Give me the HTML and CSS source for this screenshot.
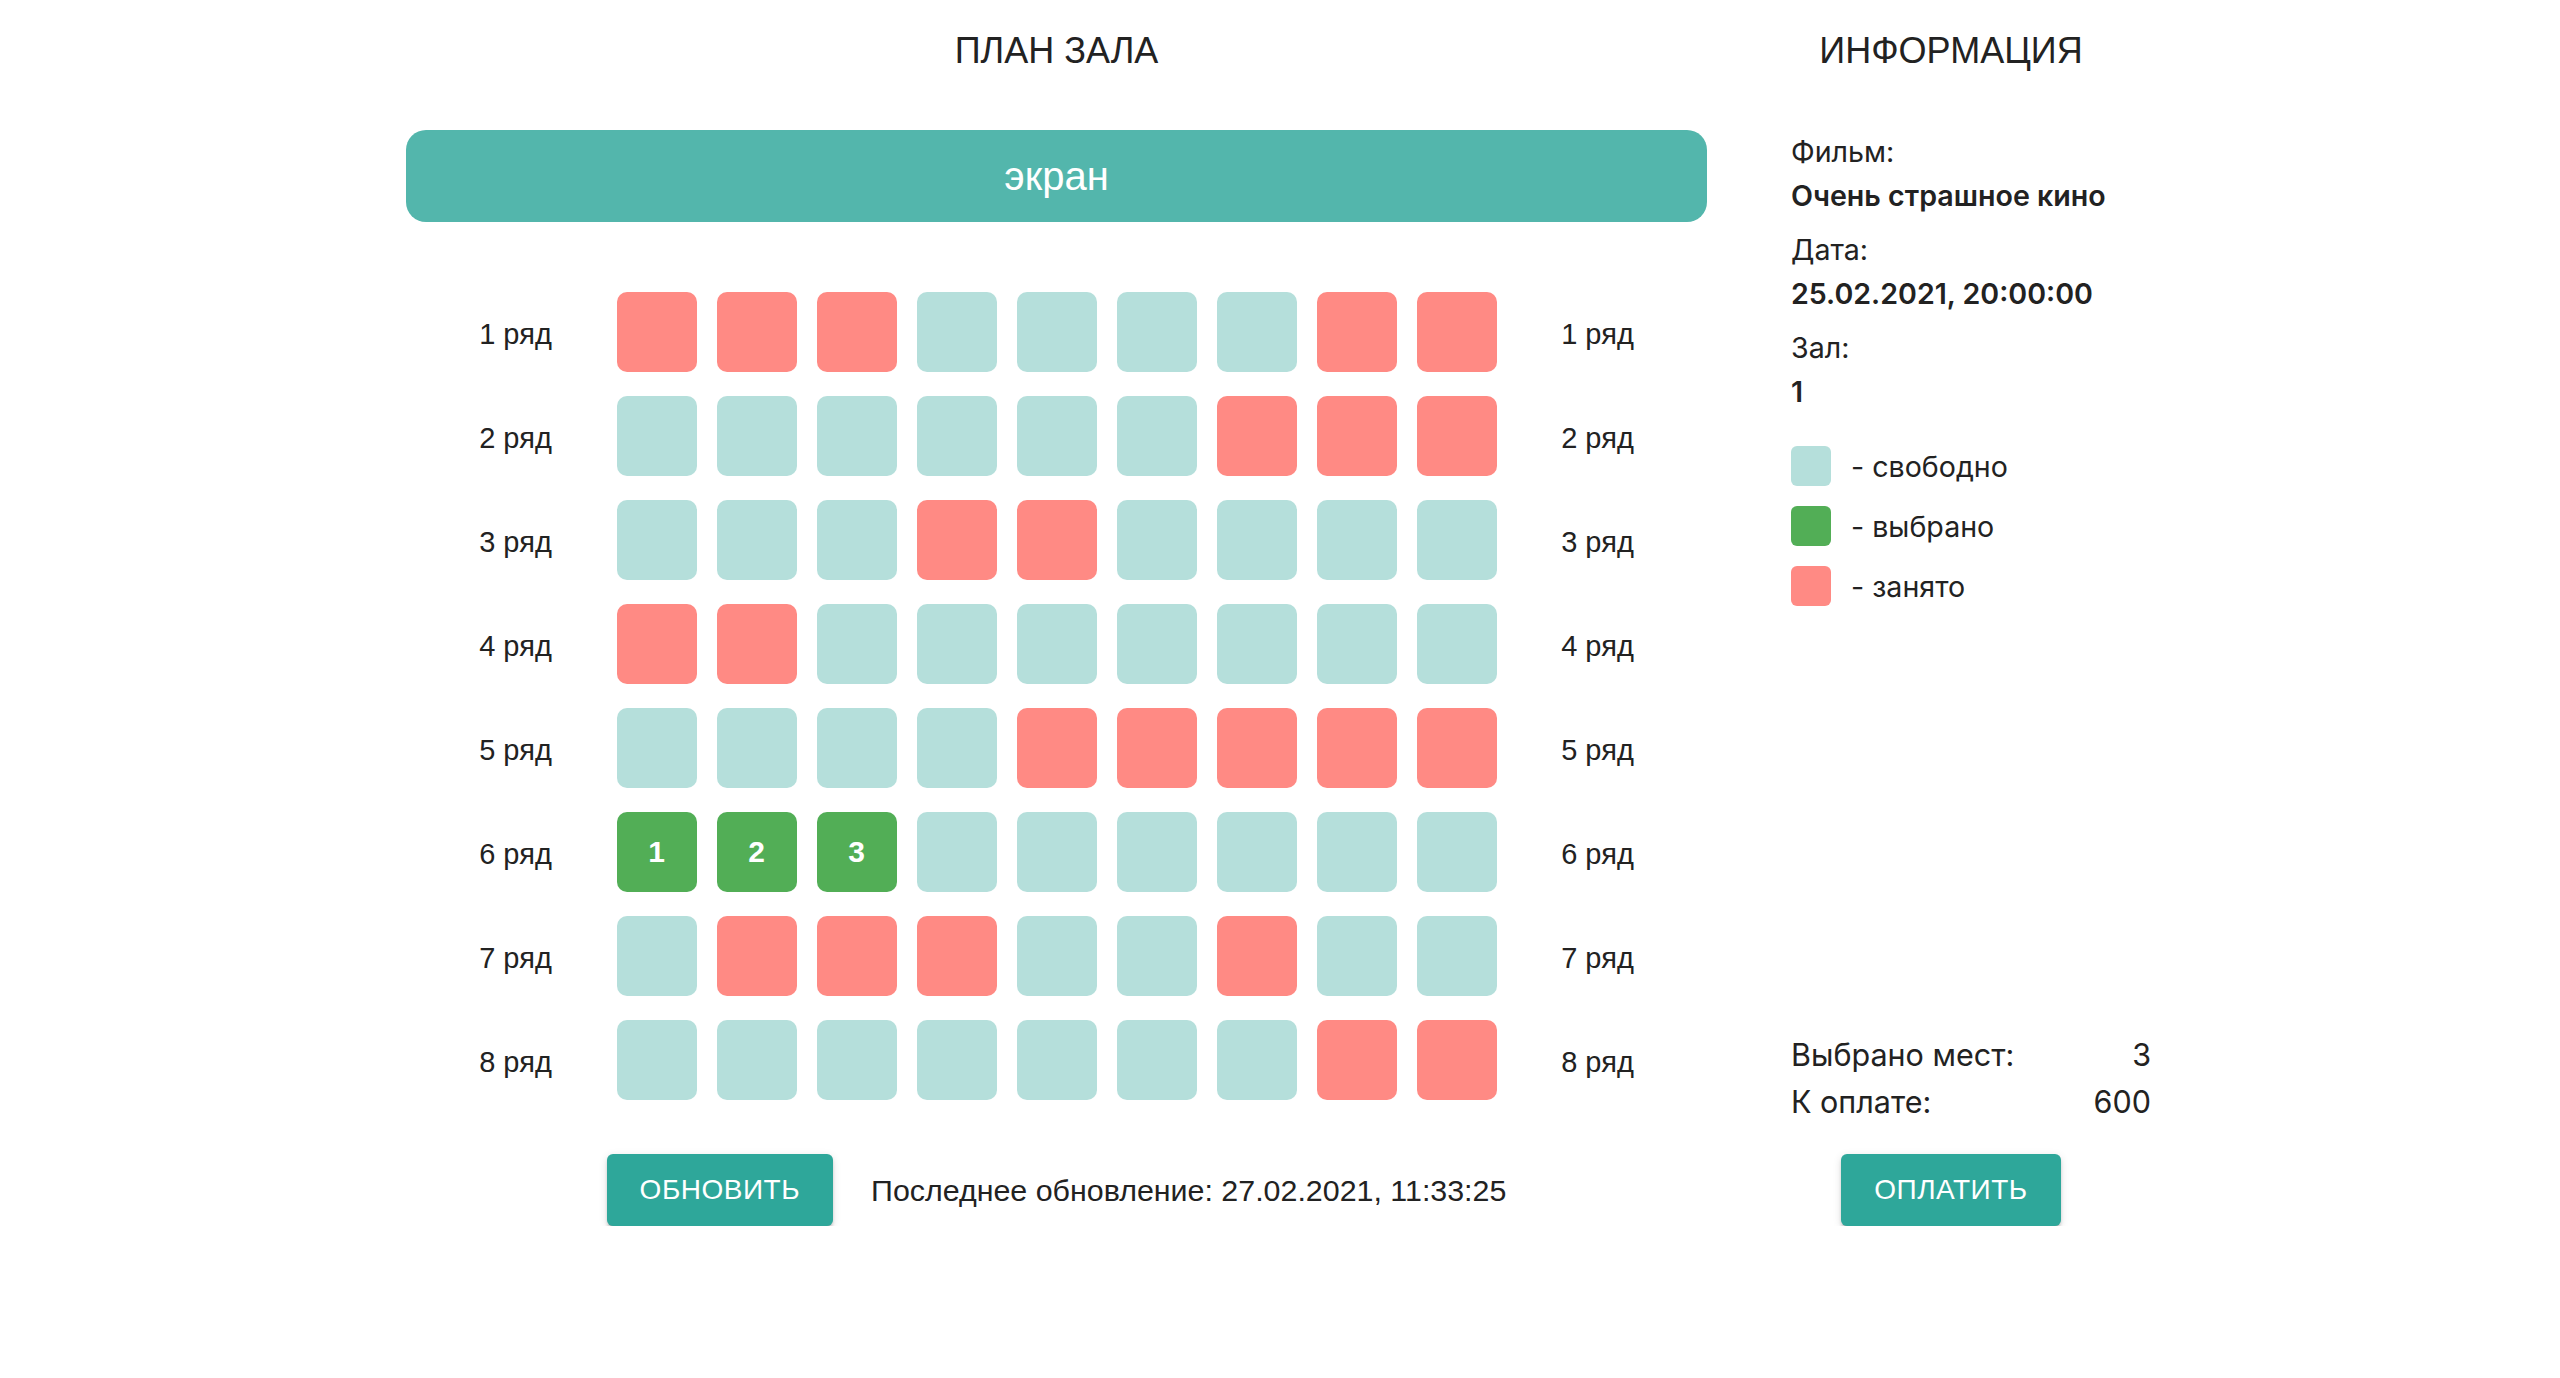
FILE: index.html
```html
<!DOCTYPE html>
<html lang="ru">
<head>
    <meta charset="UTF-8">
    <meta name="viewport" content="width=device-width, initial-scale=1.0">
    <title>План зала</title>
    <link rel="stylesheet" href="styles.css">
</head>
<body>
    <div class="page">
        <section class="hall">
            <h2 class="title">ПЛАН ЗАЛА</h2>
            <div class="screen">экран</div>

            <div class="rows" id="rows">
                <!-- ряды заполняются скриптом -->
            </div>

            <div class="hall-footer">
                <button class="btn">Обновить</button>
                <span class="updated">Последнее обновление: 27.02.2021, 11:33:25</span>
            </div>
        </section>

        <aside class="info">
            <h2 class="title">ИНФОРМАЦИЯ</h2>

            <div class="info-item">
                <div>Фильм:</div>
                <div class="value">Очень страшное кино</div>
            </div>
            <div class="info-item">
                <div>Дата:</div>
                <div class="value">25.02.2021, 20:00:00</div>
            </div>
            <div class="info-item">
                <div>Зал:</div>
                <div class="value">1</div>
            </div>

            <ul class="legend">
                <li><span class="mark free"></span>- свободно</li>
                <li><span class="mark selected"></span>- выбрано</li>
                <li><span class="mark taken"></span>- занято</li>
            </ul>

            <div class="summary">
                <div class="summary-row"><span>Выбрано мест:</span><span>3</span></div>
                <div class="summary-row"><span>К оплате:</span><span>600</span></div>
            </div>

            <button class="btn btn-pay">Оплатить</button>
        </aside>
    </div>

    <script>
        // 0 - свободно, 1 - занято, 2 - выбрано
        const hall = [
            [1, 1, 1, 0, 0, 0, 0, 1, 1],
            [0, 0, 0, 0, 0, 0, 1, 1, 1],
            [0, 0, 0, 1, 1, 0, 0, 0, 0],
            [1, 1, 0, 0, 0, 0, 0, 0, 0],
            [0, 0, 0, 0, 1, 1, 1, 1, 1],
            [2, 2, 2, 0, 0, 0, 0, 0, 0],
            [0, 1, 1, 1, 0, 0, 1, 0, 0],
            [0, 0, 0, 0, 0, 0, 0, 1, 1]
        ];
        const classes = ['free', 'taken', 'selected'];

        const rowsBox = document.getElementById('rows');
        hall.forEach((row, i) => {
            const line = document.createElement('div');
            line.className = 'row';

            let seats = '';
            row.forEach((state, j) => {
                const num = state === 2 ? j + 1 : '';
                seats += `<div class="seat ${classes[state]}">${num}</div>`;
            });

            line.innerHTML = `
                <div class="row-label">${i + 1} ряд</div>
                <div class="seats">${seats}</div>
                <div class="row-label">${i + 1} ряд</div>
            `;
            rowsBox.appendChild(line);
        });
    </script>
</body>
</html>
```

FILE: styles.css
```css
body {
    margin: 0;
    background-color: #fff;
    color: #222;
    font-family: "Liberation Sans", Arial, sans-serif;
}
.page {
    width: 1748px;
    margin: 0 auto;
    padding-top: 30px;
    display: flex;
    gap: 44px;
}
.title {
    margin: 0 0 58px;
    font-size: 36px;
    font-weight: normal;
    line-height: 42px;
    text-align: center;
}

/* план зала */
.hall {
    width: 1301px;
    display: flex;
    flex-direction: column;
}
.screen {
    height: 92px;
    line-height: 93px;
    border-radius: 20px;
    background-color: #53b6ac;
    color: #fff;
    font-size: 40px;
    text-align: center;
}
.rows {
    margin-top: 70px;
    display: flex;
    flex-direction: column;
    align-items: center;
    gap: 24px;
}
.row {
    display: flex;
    align-items: center;
    gap: 36px;
}
.row-label {
    width: 130px;
    padding-top: 5px;
    font-size: 29px;
    text-align: center;
}
.seats {
    display: flex;
    gap: 20px;
}
.seat {
    width: 80px;
    height: 80px;
    border-radius: 10px;
    display: flex;
    align-items: center;
    justify-content: center;
    color: #fff;
    font-size: 30px;
    font-weight: bold;
}
.free {
    background-color: #b5dfdb;
}
.taken {
    background-color: #ff8a84;
}
.selected {
    background-color: #52ae56;
}
.hall-footer {
    margin-top: 54px;
    display: flex;
    align-items: center;
    justify-content: center;
    gap: 38px;
}
.updated {
    font-size: 30.4px;
}
.btn {
    height: 72px;
    padding: 0 33px;
    border: none;
    border-radius: 6px;
    background-color: #2ea79a;
    color: #fff;
    font-family: "Liberation Sans", Arial, sans-serif;
    font-size: 28px;
    letter-spacing: 0.5px;
    text-transform: uppercase;
    box-shadow: 0 5px 2px -3px rgba(0, 0, 0, 0.2), 0 3px 3px 0 rgba(0, 0, 0, 0.14), 0 2px 8px 0 rgba(0, 0, 0, 0.12);
    cursor: pointer;
}

/* информация */
.info {
    width: 400px;
    display: flex;
    flex-direction: column;
    font-family: Inter, "Noto Sans", sans-serif;
    font-size: 28.6px;
}
.info .title {
    font-family: "Liberation Sans", Arial, sans-serif;
}
.info-item {
    padding-left: 40px;
    margin-bottom: 10px;
    line-height: 44px;
}
.info-item .value {
    font-weight: 600;
}
.legend {
    list-style: none;
    margin: 22px 0 0;
    padding-left: 40px;
    display: flex;
    flex-direction: column;
    gap: 20px;
}
.legend li {
    display: flex;
    align-items: center;
    gap: 20px;
}
.mark {
    width: 40px;
    height: 40px;
    border-radius: 6px;
}
.summary {
    margin-top: auto;
    padding-left: 40px;
    margin-bottom: 29px;
    line-height: 47px;
    font-size: 30.5px;
}
.summary-row {
    display: flex;
    justify-content: space-between;
}
.btn-pay {
    align-self: center;
}
```
